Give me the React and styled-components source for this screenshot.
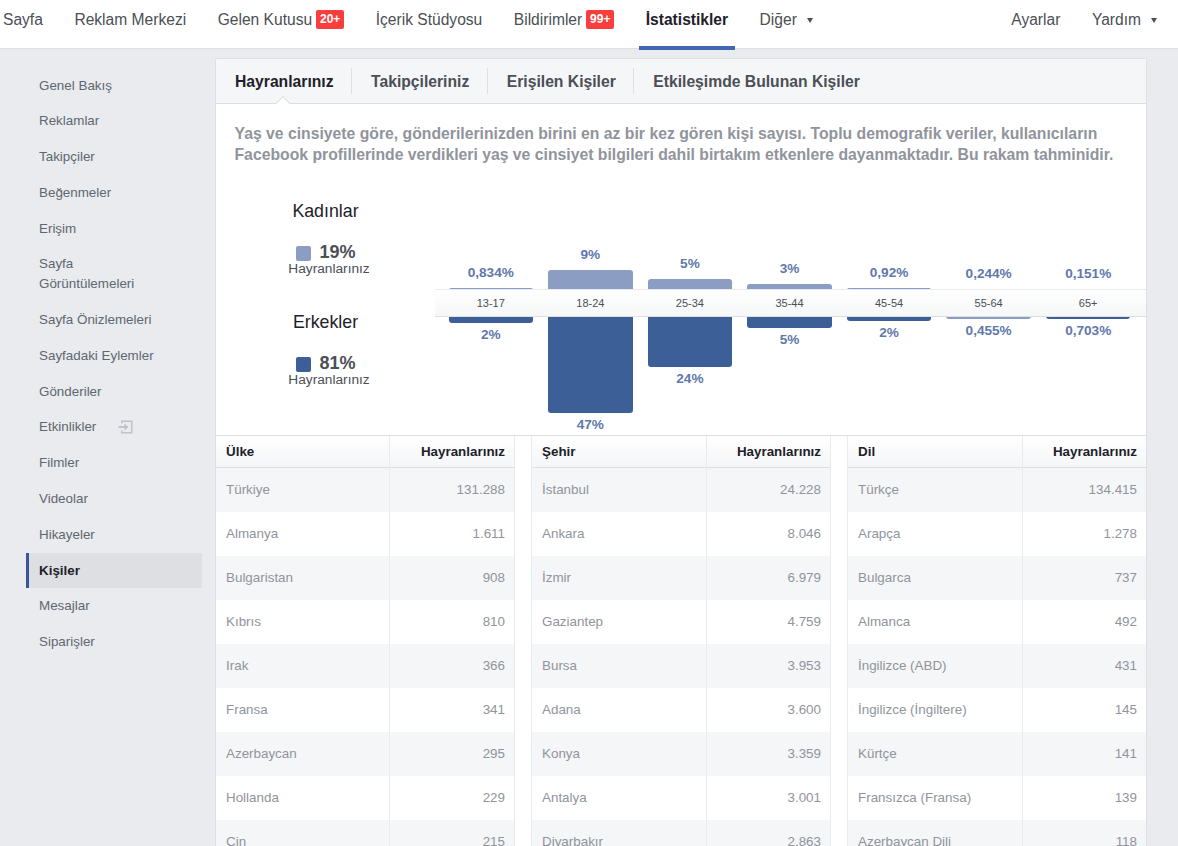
import React from 'react';
import styled, { createGlobalStyle } from 'styled-components';

const GlobalStyle = createGlobalStyle`
  html, body {
    margin: 0;
    height: 100%;
    overflow: hidden;
    background: #e9ebee;
    font-family: "Liberation Sans", Arial, sans-serif;
  }
`;

const Root = styled.div`
  width: 1178px;
  height: 846px;
  overflow: hidden;
`;

const TopNav = styled.nav`
  height: 48px;
  background: #fff;
  border-bottom: 1px solid #dddfe2;
  display: flex;
  align-items: stretch;
  padding: 0 21px 0 3px;
`;

const NavGroup = styled.div`
  display: flex;
  gap: 31.5px;
  margin-left: ${props => (props.$right ? 'auto' : '0')};
`;

const NavItem = styled.div`
  position: relative;
  display: flex;
  align-items: center;
  height: 40px;
  font-size: 15.6px;
  font-weight: ${props => (props.$active ? 700 : 400)};
  color: ${props => (props.$active ? '#1d2129' : '#4b4f56')};
  ${props => props.$active && `
    &:after {
      content: '';
      position: absolute;
      left: -7px;
      right: -7px;
      top: 46px;
      height: 4px;
      background: #4267b2;
    }
  `}
`;

const Badge = styled.span`
  margin-left: 4px;
  background: #fa3e3e;
  color: #fff;
  font-size: 12px;
  font-weight: 700;
  height: 19px;
  line-height: 18px;
  width: 28px;
  text-align: center;
  border-radius: 2px;
  margin-top: -1px;
`;

const Caret = styled.span`
  margin-left: 10px;
  width: 0;
  height: 0;
  border-left: 3px solid transparent;
  border-right: 3px solid transparent;
  border-top: 5px solid #4b4f56;
`;

const Body = styled.div`
  display: flex;
  align-items: flex-start;
`;

const Sidebar = styled.aside`
  width: 176px;
  margin: 18.5px 13px 0 26px;
  flex: none;
`;

const SideItem = styled.div`
  display: flex;
  align-items: center;
  min-height: 19.8px;
  padding: 8px 0 8px ${props => (props.$active ? '10px' : '13px')};
  line-height: 19.8px;
  font-size: 13.4px;
  color: ${props => (props.$active ? '#1d2129' : '#606770')};
  font-weight: ${props => (props.$active ? 700 : 400)};
  background: ${props => (props.$active ? '#dddfe2' : 'transparent')};
  border-left: ${props => (props.$active ? '3px solid #365899' : '0')};
`;

const SideText = styled.span`
  max-width: 125px;
`;

const SideIcon = styled.svg`
  margin-left: 22px;
  flex: none;
`;

const Panel = styled.main`
  width: 930px;
  margin-top: 9px;
  background: #fff;
  border: 1px solid #dddfe2;
  border-radius: 3px 3px 0 0;
  flex: none;
`;

const Tabs = styled.div`
  height: 44px;
  display: flex;
  align-items: center;
  background: #f5f6f7;
  border-bottom: 1px solid #dddfe2;
`;

const Tab = styled.div`
  position: relative;
  height: 26px;
  line-height: 28px;
  padding: 0 17.5px 0 19px;
  font-size: 15.7px;
  font-weight: 700;
  color: ${props => (props.$active ? '#1d2129' : '#4b4f56')};
  border-right: ${props => (props.$last ? '0' : '1px solid #dddfe2')};
  ${props => props.$active && `
    &:after {
      content: '';
      position: absolute;
      left: 62px;
      bottom: -14px;
      width: 9px;
      height: 9px;
      background: #fff;
      border-left: 1px solid #dddfe2;
      border-top: 1px solid #dddfe2;
      transform: rotate(45deg);
    }
  `}
`;

const Description = styled.p`
  margin: 0;
  padding: 19px 0 0 18.5px;
  height: 51px;
  font-size: 15.75px;
  font-weight: 700;
  line-height: 21px;
  color: #90949c;
  white-space: pre-line;
`;

const ChartSection = styled.section`
  display: flex;
  height: 261px;
`;

const Legend = styled.div`
  width: 226px;
  flex: none;
  padding-top: 27px;
  display: flex;
  flex-direction: column;
  align-items: center;
  box-sizing: border-box;
`;

const LegendGroup = styled.div`
  height: 111px;
  display: flex;
  flex-direction: column;
  align-items: center;
`;

const LegendTitle = styled.div`
  font-size: 17.8px;
  line-height: 20px;
  color: #1d2129;
  margin-right: 7px;
`;

const LegendValue = styled.div`
  display: flex;
  align-items: center;
  margin: 21px 6px 0 0;
  font-size: 18px;
  font-weight: 700;
  line-height: 20px;
  color: #4b4f56;
`;

const Swatch = styled.span`
  width: 15px;
  height: 15px;
  border-radius: 2px;
  margin-right: 8px;
  margin-top: 2px;
  background: ${props => props.$color};
`;

const LegendCaption = styled.div`
  font-size: 13.7px;
  line-height: 15px;
  margin-top: -1px;
  color: #4b4f56;
`;

const Chart = styled.div`
  flex: 1;
  margin-left: -7px;
  min-width: 0;
`;

const BarRow = styled.div`
  display: grid;
  grid-template-columns: repeat(7, 1fr);
  padding: 0 8px 0 6px;
  height: ${props => props.$height}px;
`;

const BarCell = styled.div`
  display: flex;
  flex-direction: ${props => (props.$down ? 'column' : 'column-reverse')};
  align-items: center;
`;

const Bar = styled.div`
  width: 84.5px;
  flex: none;
  background: ${props => props.$color};
  border-radius: ${props => (props.$down ? '0 0 3px 3px' : '3px 3px 0 0')};
`;

const BarValue = styled.div`
  font-size: 13.6px;
  font-weight: 700;
  line-height: 16px;
  color: #5f78ab;
  margin: ${props => (props.$down ? '4px 0 0' : '0 0 7px')};
`;

const Band = styled.div`
  display: grid;
  grid-template-columns: repeat(7, 1fr);
  padding: 0 8px 0 6px;
  height: 26px;
  background: linear-gradient(#fff, #f6f7f8);
  border-top: 1px solid #e9ebee;
  border-bottom: 1px solid #dddfe2;
  margin-top: -1px;
  margin-bottom: -1px;
  position: relative;
`;

const BandLabel = styled.div`
  text-align: center;
  font-size: 11px;
  line-height: 27px;
  color: #4b4f56;
`;

const Tables = styled.div`
  display: grid;
  grid-template-columns: 299px 300px 299px;
  column-gap: 16px;
  border-top: 1px solid #dddfe2;
`;

const DataTable = styled.div`
  border-right: ${props => (props.$last ? '0' : '1px solid #e9ebee')};
  border-left: ${props => (props.$first ? '0' : '1px solid #e9ebee')};
`;

const HeadRow = styled.div`
  display: grid;
  grid-template-columns: ${props => props.$label}px 1fr;
  height: 31px;
  background: linear-gradient(#fff, #f5f6f7);
  border-bottom: 1px solid #dddfe2;
`;

const Row = styled.div`
  display: grid;
  grid-template-columns: ${props => props.$label}px 1fr;
  height: 44px;
  background: ${props => (props.$shaded ? '#f5f6f7' : '#fff')};
`;

const HeadCell = styled.div`
  padding: 0 9px 0 10px;
  font-size: 13.4px;
  font-weight: 700;
  line-height: 32px;
  color: #1d2129;
  text-align: ${props => (props.$num ? 'right' : 'left')};
  border-left: ${props => (props.$num ? '1px solid #e9ebee' : '0')};
`;

const Cell = styled.div`
  padding: 0 9px 0 10px;
  font-size: 13.4px;
  line-height: 43px;
  color: #90949c;
  white-space: nowrap;
  text-align: ${props => (props.$num ? 'right' : 'left')};
  border-left: ${props => (props.$num ? '1px solid #e9ebee' : '0')};
`;

const LIGHT = '#8b9dc3';
const DARK = '#3b5f96';

const sideItems = ['Genel Bakış', 'Reklamlar', 'Takipçiler', 'Beğenmeler', 'Erişim', 'Sayfa Görüntülemeleri', 'Sayfa Önizlemeleri', 'Sayfadaki Eylemler', 'Gönderiler', 'Etkinlikler', 'Filmler', 'Videolar', 'Hikayeler', 'Kişiler', 'Mesajlar', 'Siparişler'];

const ages = [
  { label: '13-17', up: 2, upValue: '0,834%', down: 7, downValue: '2%' },
  { label: '18-24', up: 20, upValue: '9%', down: 97, downValue: '47%' },
  { label: '25-34', up: 11, upValue: '5%', down: 51, downValue: '24%' },
  { label: '35-44', up: 6, upValue: '3%', down: 12, downValue: '5%' },
  { label: '45-54', up: 2, upValue: '0,92%', down: 5, downValue: '2%' },
  { label: '55-64', up: 1, upValue: '0,244%', upColor: '#d0d6e4', down: 3, downColor: LIGHT, downValue: '0,455%' },
  { label: '65+', up: 1, upValue: '0,151%', upColor: '#d0d6e4', down: 3, downValue: '0,703%' },
];

const tables = [
  { title: 'Ülke', label: 173, rows: [['Türkiye', '131.288'], ['Almanya', '1.611'], ['Bulgaristan', '908'], ['Kıbrıs', '810'], ['Irak', '366'], ['Fransa', '341'], ['Azerbaycan', '295'], ['Hollanda', '229'], ['Çin', '215']] },
  { title: 'Şehir', label: 174, rows: [['İstanbul', '24.228'], ['Ankara', '8.046'], ['İzmir', '6.979'], ['Gaziantep', '4.759'], ['Bursa', '3.953'], ['Adana', '3.600'], ['Konya', '3.359'], ['Antalya', '3.001'], ['Diyarbakır', '2.863']] },
  { title: 'Dil', label: 174, rows: [['Türkçe', '134.415'], ['Arapça', '1.278'], ['Bulgarca', '737'], ['Almanca', '492'], ['İngilizce (ABD)', '431'], ['İngilizce (İngiltere)', '145'], ['Kürtçe', '141'], ['Fransızca (Fransa)', '139'], ['Azerbaycan Dili', '118']] },
];

const ExportIcon = () => (
  <SideIcon width="16" height="16" viewBox="0 0 16 16" fill="none">
    <path d="M3 1.5H14.5V14.5H3V11.5H4.5V13H13V3H4.5V4.5H3Z" fill="#bec2c9" />
    <path d="M0.5 7H6.5V4.5L10.5 8L6.5 11.5V9H0.5Z" fill="#bec2c9" />
  </SideIcon>
);

const App = () => (
  <Root>
    <GlobalStyle />
    <TopNav>
      <NavGroup>
        <NavItem>Sayfa</NavItem>
        <NavItem>Reklam Merkezi</NavItem>
        <NavItem>Gelen Kutusu<Badge>20+</Badge></NavItem>
        <NavItem>İçerik Stüdyosu</NavItem>
        <NavItem>Bildirimler<Badge>99+</Badge></NavItem>
        <NavItem $active>İstatistikler</NavItem>
        <NavItem>Diğer<Caret /></NavItem>
      </NavGroup>
      <NavGroup $right>
        <NavItem>Ayarlar</NavItem>
        <NavItem>Yardım<Caret /></NavItem>
      </NavGroup>
    </TopNav>
    <Body>
      <Sidebar>
        {sideItems.map(item => (
          <SideItem key={item} $active={item === 'Kişiler'}>
            <SideText>{item}</SideText>
            {item === 'Etkinlikler' && <ExportIcon />}
          </SideItem>
        ))}
      </Sidebar>
      <Panel>
        <Tabs>
          <Tab $active>Hayranlarınız</Tab>
          <Tab>Takipçileriniz</Tab>
          <Tab>Erişilen Kişiler</Tab>
          <Tab $last>Etkileşimde Bulunan Kişiler</Tab>
        </Tabs>
        <Description>
          {'Yaş ve cinsiyete göre, gönderilerinizden birini en az bir kez gören kişi sayısı. Toplu demografik veriler, kullanıcıların\nFacebook profillerinde verdikleri yaş ve cinsiyet bilgileri dahil birtakım etkenlere dayanmaktadır. Bu rakam tahminidir.'}
        </Description>
        <ChartSection>
          <Legend>
            <LegendGroup>
              <LegendTitle>Kadınlar</LegendTitle>
              <LegendValue><Swatch $color={LIGHT} />19%</LegendValue>
              <LegendCaption>Hayranlarınız</LegendCaption>
            </LegendGroup>
            <LegendGroup>
              <LegendTitle>Erkekler</LegendTitle>
              <LegendValue><Swatch $color={DARK} />81%</LegendValue>
              <LegendCaption>Hayranlarınız</LegendCaption>
            </LegendGroup>
          </Legend>
          <Chart>
            <BarRow $height={116}>
              {ages.map(age => (
                <BarCell key={age.label}>
                  <Bar $color={age.upColor || LIGHT} style={{ height: age.up }} />
                  <BarValue>{age.upValue}</BarValue>
                </BarCell>
              ))}
            </BarRow>
            <Band>
              {ages.map(age => <BandLabel key={age.label}>{age.label}</BandLabel>)}
            </Band>
            <BarRow $height={117}>
              {ages.map(age => (
                <BarCell key={age.label} $down>
                  <Bar $down $color={age.downColor || DARK} style={{ height: age.down }} />
                  <BarValue $down>{age.downValue}</BarValue>
                </BarCell>
              ))}
            </BarRow>
          </Chart>
        </ChartSection>
        <Tables>
          {tables.map((table, i) => (
            <DataTable key={table.title} $first={i === 0} $last={i === 2}>
              <HeadRow $label={table.label}>
                <HeadCell>{table.title}</HeadCell>
                <HeadCell $num>Hayranlarınız</HeadCell>
              </HeadRow>
              {table.rows.map((row, r) => (
                <Row key={row[0]} $label={table.label} $shaded={r % 2 === 0}>
                  <Cell>{row[0]}</Cell>
                  <Cell $num>{row[1]}</Cell>
                </Row>
              ))}
            </DataTable>
          ))}
        </Tables>
      </Panel>
    </Body>
  </Root>
);

export default App;
